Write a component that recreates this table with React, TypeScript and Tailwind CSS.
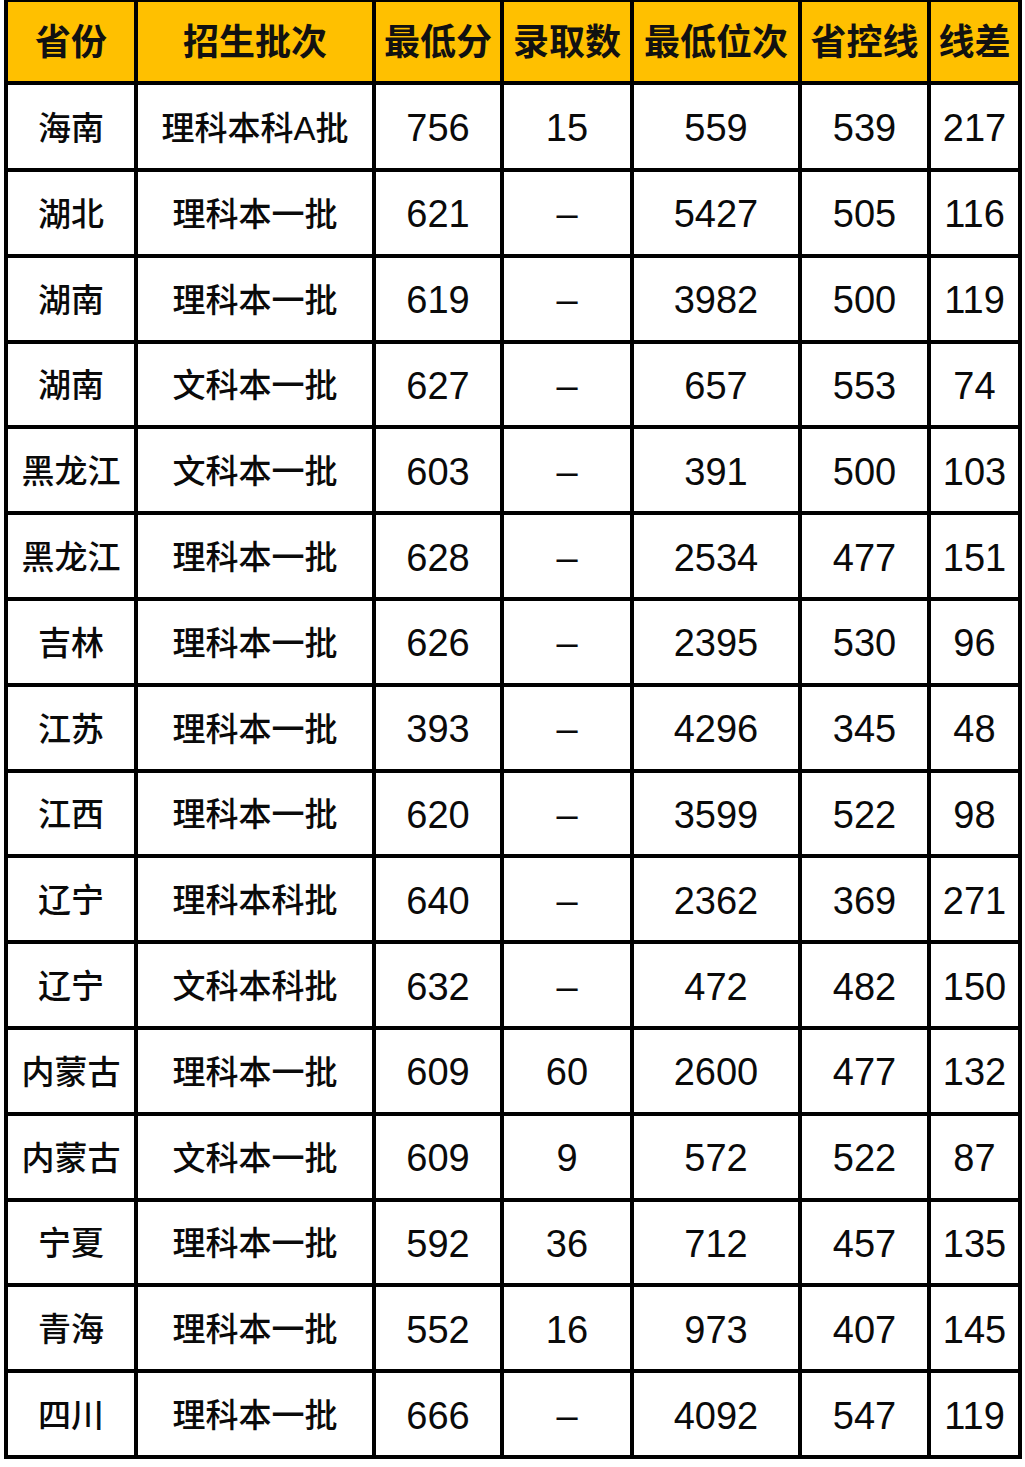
import React from "react";

const headers = ["省份", "招生批次", "最低分", "录取数", "最低位次", "省控线", "线差"];

const rows: string[][] = [
  ["海南", "理科本科A批", "756", "15", "559", "539", "217"],
  ["湖北", "理科本一批", "621", "–", "5427", "505", "116"],
  ["湖南", "理科本一批", "619", "–", "3982", "500", "119"],
  ["湖南", "文科本一批", "627", "–", "657", "553", "74"],
  ["黑龙江", "文科本一批", "603", "–", "391", "500", "103"],
  ["黑龙江", "理科本一批", "628", "–", "2534", "477", "151"],
  ["吉林", "理科本一批", "626", "–", "2395", "530", "96"],
  ["江苏", "理科本一批", "393", "–", "4296", "345", "48"],
  ["江西", "理科本一批", "620", "–", "3599", "522", "98"],
  ["辽宁", "理科本科批", "640", "–", "2362", "369", "271"],
  ["辽宁", "文科本科批", "632", "–", "472", "482", "150"],
  ["内蒙古", "理科本一批", "609", "60", "2600", "477", "132"],
  ["内蒙古", "文科本一批", "609", "9", "572", "522", "87"],
  ["宁夏", "理科本一批", "592", "36", "712", "457", "135"],
  ["青海", "理科本一批", "552", "16", "973", "407", "145"],
  ["四川", "理科本一批", "666", "–", "4092", "547", "119"],
];

export default function App() {
  return (
    <div
      className="w-[1025px] h-[1467px] bg-white"
      style={{ fontFamily: '"Liberation Sans", "Noto Sans CJK SC", sans-serif' }}
    >
      <div className="ml-[4px] w-[1018px] bg-black pt-[2px] pb-[4px] px-[4px] grid grid-cols-[126px_234px_124px_126px_164px_125px_87px] grid-rows-[79px_83px_repeat(15,81.8px)] gap-[4px]">
        {headers.map((h) => (
          <div
            key={h}
            className="bg-[#ffc000] flex items-center justify-center pt-[2px] text-[36px] font-bold text-[#111] leading-none whitespace-nowrap"
          >
            {h}
          </div>
        ))}
        {rows.map((r, i) =>
          r.map((c, j) => (
            <div
              key={`${i}-${j}`}
              className={
                "bg-white flex items-center justify-center pt-[3px] text-[#0a0a0a] leading-none whitespace-nowrap " +
                (j < 2 ? "text-[33px] font-medium" : "text-[38px]")
              }
            >
              {c}
            </div>
          ))
        )}
      </div>
    </div>
  );
}
